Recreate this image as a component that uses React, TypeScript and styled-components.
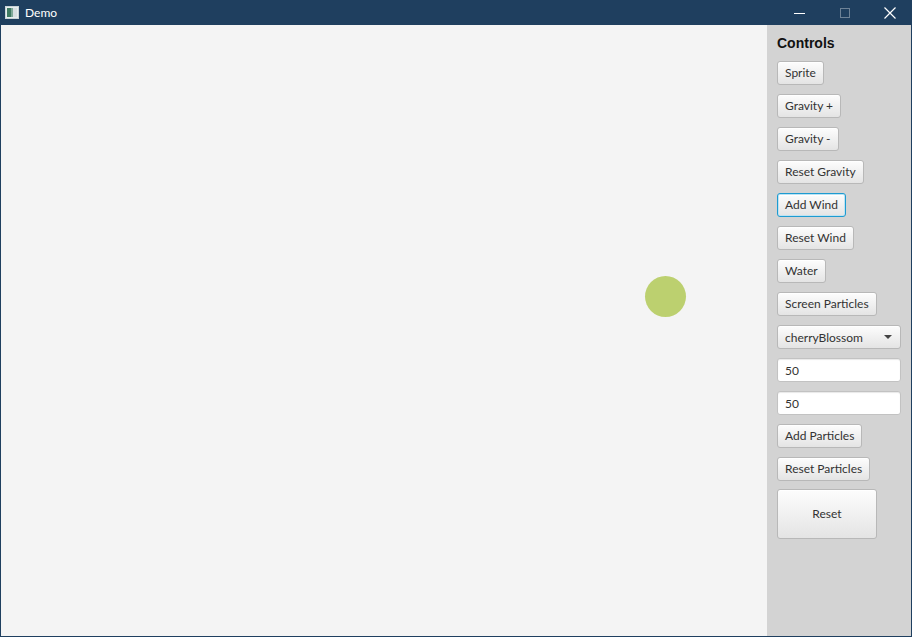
import React from "react";
import styled, { createGlobalStyle, css } from "styled-components";

const Global = createGlobalStyle`
  html, body { margin: 0; padding: 0; background: #1f3f5f; }
  body { font-family: "Segoe UI", Lato, "Noto Sans", sans-serif; }
  #root { width: 912px; height: 637px; }
`;

const Window = styled.div`
  width: 912px;
  height: 637px;
  display: flex;
  flex-direction: column;
  background: #1f3f5f;
  box-sizing: border-box;
`;

const TitleBar = styled.div`
  height: 25px;
  display: flex;
  align-items: center;
  color: #ffffff;
  flex-shrink: 0;
`;

const TitleIcon = styled.div`
  width: 14px;
  height: 13px;
  margin-left: 5px;
  margin-right: 6px;
  display: flex;
`;

const TitleText = styled.div`
  font-size: 12px;
  flex: 1;
`;

const CaptionButton = styled.div<{ $dim?: boolean }>`
  width: 45px;
  height: 25px;
  display: flex;
  align-items: center;
  justify-content: center;
  opacity: ${(p) => (p.$dim ? 0.35 : 1)};
`;

const Body = styled.div`
  flex: 1;
  display: flex;
  margin: 0 1px 1px 1px;
  min-height: 0;
`;

const Canvas = styled.div`
  flex: 1;
  background: #f4f4f4;
  position: relative;
`;

const Ball = styled.div`
  position: absolute;
  left: 644px;
  top: 251px;
  width: 41px;
  height: 41px;
  border-radius: 50%;
  background: #bcd06f;
`;

const Panel = styled.div`
  width: 144px;
  background: #d3d3d3;
  box-sizing: border-box;
  padding: 10px 10px;
  display: flex;
  flex-direction: column;
  align-items: flex-start;
  gap: 9px;
`;

const Heading = styled.div`
  font-family: "Liberation Sans", Arial, sans-serif;
  font-weight: bold;
  font-size: 14px;
  height: 17px;
  line-height: 17px;
  color: #111;
`;

const buttonBase = css`
  box-sizing: border-box;
  font-family: "Segoe UI", Lato, "Noto Sans", sans-serif;
  font-size: 12px;
  color: #333;
  background: linear-gradient(#fdfdfd, #e4e4e4);
  border: 1px solid #b8b8b8;
  border-radius: 3px;
  box-shadow: inset 0 1px 0 #ffffff;
`;

const Button = styled.button<{ $focused?: boolean; $big?: boolean }>`
  ${buttonBase};
  height: ${(p) => (p.$big ? "50px" : "24px")};
  width: ${(p) => (p.$big ? "100px" : "auto")};
  padding: 0 7px;
  margin: ${(p) => (p.$big ? "-1px 0 0 0" : "0")};
  line-height: 22px;
  white-space: nowrap;
  ${(p) =>
    p.$focused &&
    css`
      border: 1px solid #1d9bd1;
      box-shadow: inset 0 0 0 1px #bde3f3, inset 0 2px 0 #ffffff;
    `}
`;

const Combo = styled.div`
  ${buttonBase};
  width: 124px;
  height: 24px;
  display: flex;
  align-items: center;
  padding: 0 7px;
  justify-content: space-between;
  margin-top: 0;
`;

const Arrow = styled.div`
  width: 0;
  height: 0;
  border-left: 4px solid transparent;
  border-right: 4px solid transparent;
  border-top: 4px solid #444;
  margin-right: 1px;
`;

const TextField = styled.input`
  box-sizing: border-box;
  width: 124px;
  height: 24px;
  margin: 0;
  padding: 0 7px;
  font-family: "Segoe UI", Lato, "Noto Sans", sans-serif;
  font-size: 12px;
  color: #333;
  background: #ffffff;
  border: 1px solid #c2c2c2;
  border-radius: 3px;
  box-shadow: inset 0 1px 1px #e8e8e8;
  outline: none;
`;

const labels = [
  "Sprite",
  "Gravity +",
  "Gravity -",
  "Reset Gravity",
  "Add Wind",
  "Reset Wind",
  "Water",
  "Screen Particles",
];

export default function App() {
  return (
    <>
      <Global />
      <Window>
        <TitleBar>
          <TitleIcon>
            <svg width="14" height="13" viewBox="0 0 14 13">
              <rect x="0.5" y="0.5" width="13" height="12" fill="#e8eef0" stroke="#c9d3d6" />
              <rect x="2" y="2" width="4" height="9" fill="#3f7a62" />
              <rect x="6" y="2" width="2" height="9" fill="#7fa999" />
              <rect x="8" y="2" width="4" height="9" fill="#d8e0e2" />
            </svg>
          </TitleIcon>
          <TitleText>Demo</TitleText>
          <CaptionButton>
            <svg width="12" height="12" viewBox="0 0 12 12">
              <line x1="0" y1="6.5" x2="11" y2="6.5" stroke="#fff" strokeWidth="1" />
            </svg>
          </CaptionButton>
          <CaptionButton $dim>
            <svg width="12" height="12" viewBox="0 0 12 12">
              <rect x="1.5" y="1.5" width="9" height="9" fill="none" stroke="#fff" strokeWidth="1" />
            </svg>
          </CaptionButton>
          <CaptionButton>
            <svg width="12" height="12" viewBox="0 0 12 12">
              <path d="M0.5 0.5 L11.5 11.5 M11.5 0.5 L0.5 11.5" stroke="#fff" strokeWidth="1.2" />
            </svg>
          </CaptionButton>
        </TitleBar>
        <Body>
          <Canvas>
            <Ball />
          </Canvas>
          <Panel>
            <Heading>Controls</Heading>
            {labels.map((l) => (
              <Button key={l} $focused={l === "Add Wind"}>
                {l}
              </Button>
            ))}
            <Combo>
              <span>cherryBlossom</span>
              <Arrow />
            </Combo>
            <TextField defaultValue="50" />
            <TextField defaultValue="50" />
            <Button>Add Particles</Button>
            <Button>Reset Particles</Button>
            <Button $big>Reset</Button>
          </Panel>
        </Body>
      </Window>
    </>
  );
}
